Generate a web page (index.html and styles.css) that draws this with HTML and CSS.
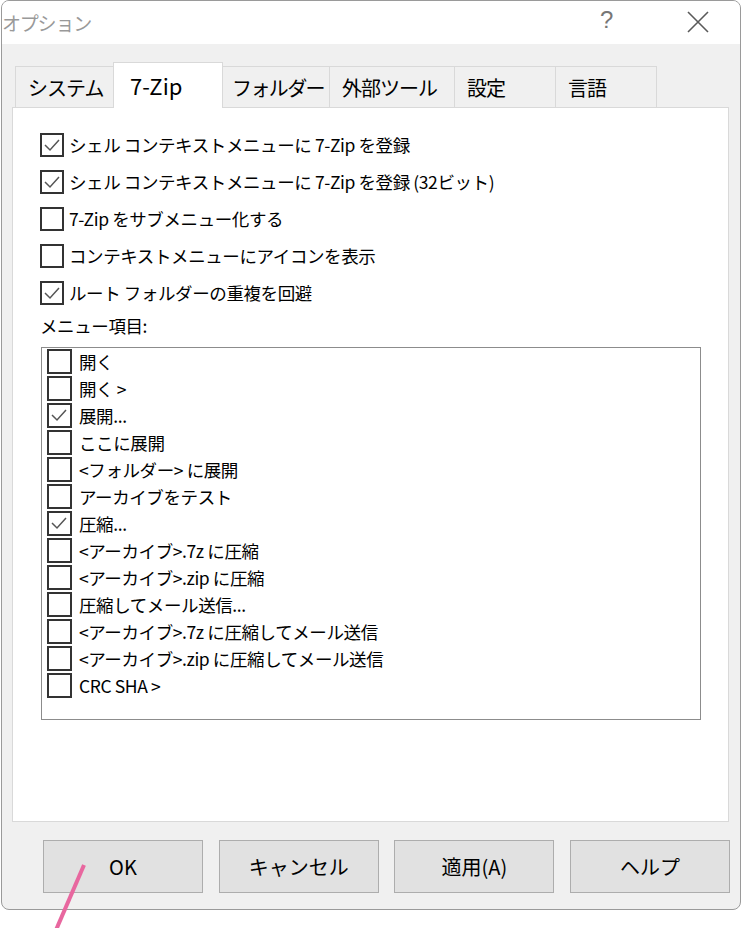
FILE: index.html
```html
<html>
<head>
    <meta charset="UTF-8">
    <title>オプション</title>
    <link rel="stylesheet" href="styles.css">
</head>
<body>
    <div class="window">
        <div class="titlebar">
            <span class="title">オプション</span>
            <span class="help-btn">?</span>
            <svg class="close-btn" width="22" height="22" viewBox="0 0 22 22">
                <path d="M1 1 L21 21 M21 1 L1 21" stroke="#5a5a5a" stroke-width="1.6" fill="none"/>
            </svg>
        </div>

        <div class="tabs">
            <div class="tab" style="width: 99px;">システム</div>
            <div class="tab active" style="width: 110px;">7-Zip</div>
            <div class="tab tight" style="width: 108px;">フォルダー</div>
            <div class="tab" style="width: 126px;">外部ツール</div>
            <div class="tab" style="width: 102px;">設定</div>
            <div class="tab" style="width: 102px;">言語</div>
        </div>

        <div class="panel">
            <div class="opt"><span class="box checked"><svg viewBox="0 0 20 20"><path d="M3 10 L8 15 L17 5"/></svg></span><span>シェル コンテキストメニューに 7-Zip を登録</span></div>
            <div class="opt"><span class="box checked"><svg viewBox="0 0 20 20"><path d="M3 10 L8 15 L17 5"/></svg></span><span>シェル コンテキストメニューに 7-Zip を登録 (32ビット)</span></div>
            <div class="opt"><span class="box"></span><span>7-Zip をサブメニュー化する</span></div>
            <div class="opt"><span class="box"></span><span>コンテキストメニューにアイコンを表示</span></div>
            <div class="opt"><span class="box checked"><svg viewBox="0 0 20 20"><path d="M3 10 L8 15 L17 5"/></svg></span><span>ルート フォルダーの重複を回避</span></div>

            <div class="list-label">メニュー項目:</div>
            <div class="list">
                <div class="item"><span class="box"></span><span>開く</span></div>
                <div class="item"><span class="box"></span><span>開く &gt;</span></div>
                <div class="item"><span class="box checked"><svg viewBox="0 0 21 21"><path d="M3 10 L8 15 L17 5"/></svg></span><span>展開...</span></div>
                <div class="item"><span class="box"></span><span>ここに展開</span></div>
                <div class="item"><span class="box"></span><span>&lt;フォルダー&gt; に展開</span></div>
                <div class="item"><span class="box"></span><span>アーカイブをテスト</span></div>
                <div class="item"><span class="box checked"><svg viewBox="0 0 21 21"><path d="M3 10 L8 15 L17 5"/></svg></span><span>圧縮...</span></div>
                <div class="item"><span class="box"></span><span>&lt;アーカイブ&gt;.7z に圧縮</span></div>
                <div class="item"><span class="box"></span><span>&lt;アーカイブ&gt;.zip に圧縮</span></div>
                <div class="item"><span class="box"></span><span>圧縮してメール送信...</span></div>
                <div class="item"><span class="box"></span><span>&lt;アーカイブ&gt;.7z に圧縮してメール送信</span></div>
                <div class="item"><span class="box"></span><span>&lt;アーカイブ&gt;.zip に圧縮してメール送信</span></div>
                <div class="item"><span class="box"></span><span>CRC SHA &gt;</span></div>
            </div>
        </div>

        <div class="buttons">
            <button class="btn">OK</button>
            <button class="btn">キャンセル</button>
            <button class="btn">適用(A)</button>
            <button class="btn">ヘルプ</button>
        </div>
    </div>

    <svg class="pointer" width="743" height="928" viewBox="0 0 743 928">
        <line x1="84" y1="865" x2="56" y2="930" stroke="#e8679f" stroke-width="4"/>
    </svg>
</body>
</html>
```

FILE: styles.css
```css
* {
    margin: 0;
    padding: 0;
    box-sizing: border-box;
}

body {
    font-family: 'Noto Sans CJK JP', 'Noto Sans', sans-serif;
    background: #fff;
    color: #000;
    width: 743px;
    height: 928px;
    position: relative;
    overflow: hidden;
}

.window {
    margin-left: 1px;
    width: 740px;
    height: 910px;
    border: 1px solid #9a9a9a;
    border-radius: 8px;
    background: #f0f0f0;
    overflow: hidden;
}

.titlebar {
    height: 43px;
    background: #fff;
    display: flex;
    align-items: center;
    position: relative;
}

.title {
    font-size: 19px;
    color: #999;
    letter-spacing: -1.2px;
}

.help-btn {
    position: absolute;
    left: 598px;
    top: 5px;
    font-size: 24px;
    color: #777;
    font-family: 'Liberation Sans', sans-serif;
}

.close-btn {
    position: absolute;
    left: 685px;
    top: 10px;
}

.tabs {
    display: flex;
    align-items: flex-end;
    margin: 18px 0 0 13px;
    height: 45px;
}

.tab {
    height: 41px;
    background: #f0f0f0;
    border: 1px solid #d9d9d9;
    border-bottom: none;
    margin-left: -1px;
    font-size: 20px;
    line-height: 42px;
    padding-left: 12px;
    letter-spacing: -1px;
    white-space: nowrap;
}

.tab:first-child {
    margin-left: 0;
}

.tab.tight {
    padding-left: 9px;
    letter-spacing: -1.6px;
}

.tab.active {
    height: 46px;
    background: #fff;
    position: relative;
    z-index: 2;
    margin-bottom: -1px;
    padding-left: 16px;
    line-height: 44px;
    font-size: 22px;
    letter-spacing: 0;
}

.panel {
    margin-left: 10px;
    width: 717px;
    height: 715px;
    background: #fff;
    border: 1px solid #d9d9d9;
    padding: 18px 0 0 27px;
    position: relative;
    z-index: 1;
}

.opt {
    display: flex;
    align-items: center;
    height: 37px;
    font-size: 17.5px;
    letter-spacing: -0.4px;
    white-space: nowrap;
}

.box {
    width: 24px;
    height: 24px;
    border: 2px solid #333;
    background: #fff;
    flex-shrink: 0;
    margin-right: 5px;
    display: flex;
}

.box svg {
    width: 100%;
    height: 100%;
}

.box path {
    fill: none;
    stroke: #555;
    stroke-width: 1.5;
}

.list-label {
    height: 30px;
    line-height: 30px;
    font-size: 17.5px;
    letter-spacing: -0.4px;
}

.list {
    margin: 6px 0 0 1px;
    width: 660px;
    height: 373px;
    border: 1px solid #8c8c8c;
    padding-left: 5px;
}

.item {
    display: flex;
    align-items: center;
    height: 27px;
    font-size: 17.5px;
    letter-spacing: -0.4px;
    white-space: nowrap;
}

.item .box {
    width: 25px;
    height: 25px;
    margin-right: 7px;
}

.buttons {
    display: flex;
    gap: 15.7px;
    margin: 18px 0 0 41px;
}

.btn {
    width: 160px;
    height: 53px;
    background: #e1e1e1;
    border: 1px solid #adadad;
    font-family: 'Noto Sans CJK JP', sans-serif;
    font-size: 20px;
    color: #000;
}

.pointer {
    position: absolute;
    left: 0;
    top: 0;
    pointer-events: none;
}
```
